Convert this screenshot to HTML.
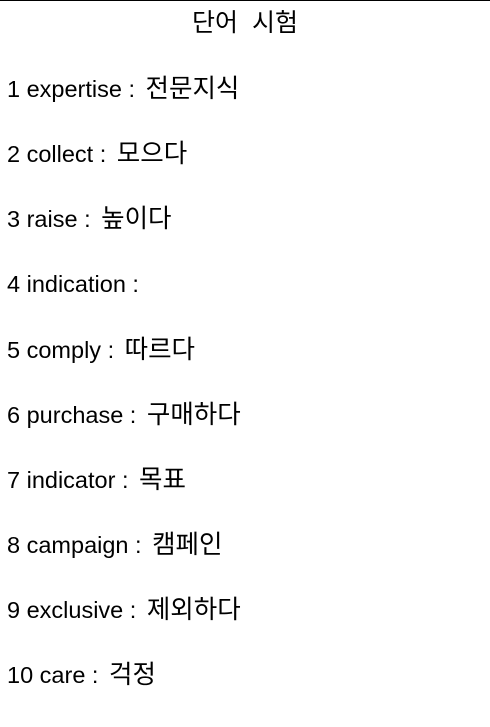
<!DOCTYPE html>
<html><head><meta charset="utf-8"><style>
html,body{margin:0;padding:0;background:#fff;width:490px;height:727px;overflow:hidden}
body{border-top:1px solid #000;box-sizing:border-box;position:relative;font-family:"Liberation Sans","Noto Sans CJK KR",sans-serif;color:#000}
.t{position:absolute;left:0;right:0;text-align:center;top:7px;font-size:25px;line-height:30px}
.l{position:absolute;left:7px;font-size:23.5px;line-height:30px;white-space:nowrap}
.k{font-size:25.5px;margin-left:4px}
</style></head><body>
<div class="t">단어&nbsp; 시험</div>
<div class="l" style="top:73px">1 expertise : <span class="k">전문지식</span></div>
<div class="l" style="top:138px">2 collect : <span class="k">모으다</span></div>
<div class="l" style="top:203px">3 raise : <span class="k">높이다</span></div>
<div class="l" style="top:268px">4 indication : </div>
<div class="l" style="top:334px">5 comply : <span class="k">따르다</span></div>
<div class="l" style="top:399px">6 purchase : <span class="k">구매하다</span></div>
<div class="l" style="top:464px">7 indicator : <span class="k">목표</span></div>
<div class="l" style="top:529px">8 campaign : <span class="k">캠페인</span></div>
<div class="l" style="top:594px">9 exclusive : <span class="k">제외하다</span></div>
<div class="l" style="top:659px">10 care : <span class="k">걱정</span></div>
</body></html>
